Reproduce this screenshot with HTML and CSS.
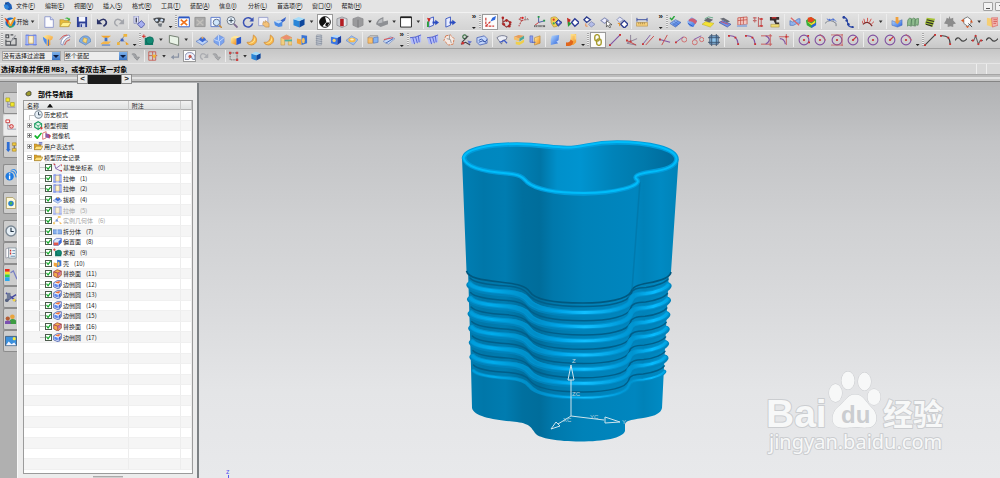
FILE: index.html
```html
<!DOCTYPE html>
<html lang="zh-CN">
  <head>
    <meta charset="UTF-8" />
    <meta name="viewport" content="width=device-width, initial-scale=1.0" />
    <title>部件导航器</title>
    <link rel="stylesheet" href="styles.css">
  </head>
  <body>
    <!-- icon set -->
    <svg class="defs" aria-hidden="true">
      <defs>
        <linearGradient id="gb" x2="1" y2="1"><stop stop-color="#b9dcff" /><stop offset="1" stop-color="#2a62dc" /></linearGradient>
        <linearGradient id="go" x2="1" y2="1"><stop stop-color="#fff0a0" /><stop offset="1" stop-color="#f08a1c" /></linearGradient>
      </defs>
      <symbol id="app" viewBox="0 0 13 13"><path d="M3 2l4-1 4 4 1 5-4 2-5-2z" fill="#1d5fb8" /><path d="M1 5l4-1 3 4-3 3-3-2z" fill="#2f86dc" /><path d="M3 2l3 2-3 1z" fill="#153a78" /></symbol>
      <symbol id="start" viewBox="0 0 13 13"><circle cx="7" cy="7" r="5.5" fill="#1c6fc4" /><path d="M0 2l5 3 2 3L11 1l2 1-5 9H6z" fill="#f39a1e" /><path d="M1 2l4 3-1 4z" fill="#d8301e" /><path d="M5 5l2 4 3-6z" fill="#ffe9b0" /><path d="M3 9l4 3 4-3-1 3-4 1z" fill="#3cb45c" /></symbol>
      <symbol id="new" viewBox="0 0 13 13"><path d="M2 .8h6L11.200 4v8.300H2z" fill="#fdfdff" stroke="#8d98cc" /><path d="M8 .8V4h3.200" fill="#d4daf6" stroke="#8d98cc" /></symbol>
      <symbol id="open" viewBox="0 0 13 13"><path d="M1 11.500V4h4l1 1h5v6.500z" fill="#e9bc3a" stroke="#a8862a" stroke-width=".6" /><path d="M1 11.500L4 7h9l-3 4.500z" fill="#fff08c" stroke="#b49430" stroke-width=".6" /><path d="M6 3q3-3 5 0l1-1v3H9l1-1Q8 2 6 3z" fill="#3fb23f" /></symbol>
      <symbol id="save" viewBox="0 0 13 13"><path d="M1 1h11v11H1z" fill="#2c3f96" /><path d="M3 1h7v5H3z" fill="#f4f6ff" /><path d="M4 8h6v4H4z" fill="#cdd4ea" /><path d="M5 9h1.500v3H5z" fill="#2c3f96" /></symbol>
      <symbol id="undo" viewBox="0 0 13 13"><path d="M3 6q6-5 8 0 1 3-3 5" fill="none" stroke="#2c3468" stroke-width="1.800" /><path d="M1 3v6h6z" fill="#2c3468" /></symbol>
      <symbol id="redo" viewBox="0 0 13 13"><path d="M10 6q-6-5-8 0-1 3 3 5" fill="none" stroke="#a3a5ab" stroke-width="1.600" /><path d="M12 3v6H6z" fill="#a3a5ab" /></symbol>
      <symbol id="copy" viewBox="0 0 13 13"><path d="M1 0h5v8H1z" fill="#dfe3fa" stroke="#7a7cb4" stroke-width=".7" /><path d="M3.500 2v5" stroke="#223" stroke-width="1.200" /><path d="M5 9l4-4 4 4-4 4z" fill="#a6aff0" stroke="#5058a8" /></symbol>
      <symbol id="binoc" viewBox="0 0 13 13"><path d="M0 3q6-3 13 0l-1 4q-2 1-3-1l-2 0q-1 3-4 1z" fill="#45484c" /><circle cx="4" cy="4.500" r="1.500" fill="#cfe0f4" /><circle cx="9.500" cy="4.500" r="1.500" fill="#cfe0f4" /><path d="M5 8l5 0-1 4-3-1z" fill="#72787e" /></symbol>
      <symbol id="fit" viewBox="0 0 13 13"><path d="M.7 1.700h11.600v10H.7z" fill="#fff" stroke="#2c58c4" /><path d="M.7 1.500h11.600" stroke="#2c58c4" stroke-width="2" /><path d="M3 4l7 6M10 4l-7 6" stroke="#f0721c" stroke-width="1.800" /></symbol>
      <symbol id="fitg" viewBox="0 0 13 13"><path d="M1 1.500h11v10H1z" fill="#a9a9a9" stroke="#949494" /><path d="M3 4l7 6M10 4l-7 6" stroke="#c2c0bc" stroke-width="1.500" /></symbol>
      <symbol id="zrect" viewBox="0 0 13 13"><path d="M1 1.500h10v10H1z" fill="#f4f8ff" stroke="#5a78cc" /><circle cx="7" cy="7" r="3.500" fill="#cfe6fb" stroke="#5a6a88" /><path d="M10 10l3 3" stroke="#c48a3c" stroke-width="1.600" /></symbol>
      <symbol id="zoom" viewBox="0 0 13 13"><circle cx="5.500" cy="5" r="4.300" fill="#eaf4fd" stroke="#66707e" /><path d="M3 5h5M5.500 2.500v5" stroke="#345" /><path d="M8.500 8.500l4 4" stroke="#7c6a90" stroke-width="2" /></symbol>
      <symbol id="rot" viewBox="0 0 13 13"><path d="M11 4.500A5 5 0 1 0 11.500 8" fill="none" stroke="#3a52b4" stroke-width="1.600" /><path d="M12.500 1v5H8z" fill="#3a52b4" /></symbol>
      <symbol id="pan" viewBox="0 0 13 13"><path d="M.7 1.500h10v9H.7z" fill="#f2f2fb" stroke="#98a0cc" /><path d="M6 6l2 1V5l4 3v4H8L5 9z" fill="#f4c27a" stroke="#b88440" stroke-width=".6" /></symbol>
      <symbol id="persp" viewBox="0 0 13 13"><path d="M0 6l5-1 4 1v5l-4 1-4-2z" fill="#4a8ae4" /><path d="M7 5l6-4-1 4-3 2z" fill="#3a64c8" /><path d="M0 6l5-1 4 1-4 2z" fill="#c4dcf8" /></symbol>
      <symbol id="cube" viewBox="0 0 13 13"><path d="M.5 3.500L7 5.500v7L.5 10z" fill="#2a86d8" /><path d="M7 5.500l5.500-2.500v6.500L7 12.500z" fill="#0d469c" /><path d="M.5 3.500L6 1l6.500 2L7 5.500z" fill="#a4dcfa" /></symbol>
      <symbol id="shade" viewBox="0 0 13 13"><circle cx="6.500" cy="6.500" r="5.800" fill="#fff" stroke="#111" /><path d="M6.500.700a5.800 5.800 0 0 0-3 10.800L8 6.500z" fill="#111" /><path d="M8 7h3.500L9 11.500 6.500 10z" fill="#111" /></symbol>
      <symbol id="sect" viewBox="0 0 13 13"><path d="M1 3l5.500-2L12 3v7l-5.500 2.500L1 10z" fill="#c9cbd0" stroke="#7f8288" stroke-width=".7" /><path d="M4.500 3h4v8h-4z" fill="#b31c22" /><path d="M8.500 3l2 .7v6.600l-2 .7z" fill="#e8e8ec" /></symbol>
      <symbol id="sectg" viewBox="0 0 13 13"><path d="M1 3l5.500-2L12 3v7l-5.500 2.500L1 10z" fill="#9a9a9c" stroke="#88888a" stroke-width=".7" /><path d="M6.500 4v8" stroke="#77777a" /></symbol>
      <symbol id="wedge" viewBox="0 0 13 13"><path d="M0 9Q1 3 8 1v5l5-1v4l-8 3z" fill="#8e9094" /><path d="M2 8q1-4 5-5v4z" fill="#bcbec2" /></symbol>
      <symbol id="wbox" viewBox="0 0 13 13"><path d="M.6 1h11.800v11H.6z" fill="#fff" stroke="#222" /><path d="M.6 1.500h11.800" stroke="#222" stroke-width="1.600" /></symbol>
      <symbol id="clip" viewBox="0 0 13 13"><path d="M2 3l5-2v9l-5 2z" fill="#e8edff" stroke="#3c58c0" /><path d="M6 6h3V4l4 3-4 3V8H6z" fill="#2a4cc0" /></symbol>
      <symbol id="clipg" viewBox="0 0 13 13"><use href="#clip" /><path d="M0 2l4 1-2 4z" fill="#d8281c" /><path d="M0 6h2v6H0z" fill="#2ca03c" /></symbol>
      <symbol id="csys" viewBox="0 0 13 13"><path d="M2 2v9h9M2 11l5-5" fill="none" stroke="#d03a34" stroke-dasharray="3 1" stroke-width="1.300" /><path d="M7 6l2-4 4-2-1 4z" fill="#2c66dc" /></symbol>
      <symbol id="pts" viewBox="0 0 13 13"><path d="M2 1v6l4-3 4 3-2 5M1 8l5 4 5-3" fill="none" stroke="#8e3a3a" stroke-width="1.200" /><g fill="#b02424"><circle cx="2" cy="2" r="1.400" /><circle cx="6" cy="5" r="1.400" /><circle cx="10" cy="7" r="1.400" /><circle cx="3" cy="9" r="1.400" /><circle cx="9" cy="11" r="1.400" /></g></symbol>
      <symbol id="csysr" viewBox="0 0 13 13"><path d="M2 3l3 2-3 6M5 5l7-2M4 1v4" fill="none" stroke="#b65252" stroke-dasharray="2 1" stroke-width="1.200" /><circle cx="6" cy="2" r="1.300" fill="#d22" /><path d="M9 0v4h4" stroke="#999" fill="none" /></symbol>
      <symbol id="wcs" viewBox="0 0 13 13"><path d="M5 0v7l7-2" fill="none" stroke="#4158a4" /><path d="M5 7l-4 3" stroke="#c33" /><path d="M4 0h2v2H4zM10 4h2v2h-2z" fill="#2b9a4a" /><path d="M0 10h12v2H0z" fill="#666" /><path d="M1 11h1m1 0h2m1 0h1m1 0h2" stroke="#ddd" /></symbol>
      <symbol id="pal" viewBox="0 0 13 13"><path d="M1 2q6-3 8 2l-2 3 1 4-4 1q-4-4-3-10z" fill="#f2cf56" stroke="#a9882c" stroke-width=".6" /><circle cx="4" cy="4" r="1.200" fill="#d32" /><circle cx="4" cy="8" r="1.200" fill="#3a5" /><path d="M6 7l3-3 4 3-4 4z" fill="#5567c8" stroke="#26347c" /><path d="M9 5.500L10.500 7 9 8.500 8 7z" fill="#fff" /></symbol>
      <symbol id="show" viewBox="0 0 13 13"><path d="M0 2l4 2-3 6z" fill="#c22a22" /><path d="M1 6l4 2-4 4z" fill="#2a9a38" /><path d="M5 7l3.500-4L13 7l-4.500 4z" fill="#fff" stroke="#2c3c96" stroke-width="1.500" /></symbol>
      <symbol id="dia" viewBox="0 0 13 13"><path d="M1 4l3-3 4 3-4 3z" fill="#fff" stroke="#2c3c8e" stroke-width="1.400" /><path d="M6 9l3-3 4 3-4 3z" fill="#b4bce8" stroke="#8890b8" /><path d="M3 8v3h2" fill="none" stroke="#e84" /></symbol>
      <symbol id="diac" viewBox="0 0 13 13"><path d="M1 5l4-3 4 3-4 3z" fill="#eef" stroke="#8890b8" stroke-width="1.200" /><path d="M7 5v7l1.500-2 2 3 1-1-1.500-2.500H13z" fill="#fff" stroke="#333" stroke-width=".7" /></symbol>
      <symbol id="diab" viewBox="0 0 13 13"><path d="M1 4l3-3 4 3-4 3z" fill="#e4e6f8" stroke="#8890b8" /><path d="M5 9l4-4 4 4-4 4z" fill="#fff" stroke="#2c3c8e" stroke-width="1.500" /><path d="M2 8h2v3" fill="none" stroke="#e80" /></symbol>
      <symbol id="ruler" viewBox="0 0 13 13"><path d="M.5 7h12v4H.5z" fill="#f5cf7a" stroke="#ad8944" stroke-width=".6" /><path d="M1 4h11M1 2v4M12 2v4" stroke="#33489c" /><path d="M3 7v2m2-2v2m2-2v2m2-2v2" stroke="#84642c" stroke-width=".6" /></symbol>
      <symbol id="surf" viewBox="0 0 13 13"><path d="M1 8l6-4 6 3-6 5z" fill="url(#gb)" stroke="#3a5aa8" stroke-width=".6" /><path d="M3 7l6 4M5 5.500l6 4M4 10l6-4.500" stroke="#4668bc" stroke-width=".6" /><path d="M1 2l2 2 3-4" fill="none" stroke="#27a53a" stroke-width="1.500" /></symbol>
      <symbol id="surf2" viewBox="0 0 13 13"><path d="M1 6l5-5 6 4-4 7-4-1z" fill="url(#gb)" /><path d="M3 4q5-4 9 2l-2 3Q7 5 3 6z" fill="#ce5f74" /><path d="M2 8l5 3" stroke="#2a56c0" /></symbol>
      <symbol id="slab" viewBox="0 0 13 13"><path d="M0 9l4-3 9 2-4 4z" fill="#f4e234" stroke="#b3a416" stroke-width=".5" /><path d="M2 5l4-3 6 2-4 3z" fill="#666a72" /><path d="M3 3l4-2 5 1" stroke="#6a8" fill="none" /></symbol>
      <symbol id="slabb" viewBox="0 0 13 13"><path d="M0 7l4-2 9 4-4 3z" fill="#6f8fe8" stroke="#2d3f96" stroke-width=".6" /><path d="M1 3l4-1 7 4-3 1z" fill="#696c76" /><path d="M2 6l8 3" stroke="#d44" stroke-width=".8" /></symbol>
      <symbol id="grid" viewBox="0 0 13 13"><path d="M2 2l10-1v8L2 10z" fill="#f3c9c4" stroke="#c04a40" stroke-width=".8" /><path d="M2 5l10-1M5 2v8M8 1v8" stroke="#c04a40" stroke-width=".8" /><path d="M1 10l11-1v3H1z" fill="#9ab0d8" /></symbol>
      <symbol id="dim" viewBox="0 0 13 13"><path d="M1 2h4M1 5h4M3 1v6M7 1v11M7 3h5M7 11h5M10 3v8" fill="none" stroke="#c26a6a" stroke-width="1.200" /><path d="M8 4l2-2 2 2zM8 10l2 2 2-2z" fill="#c33" /></symbol>
      <symbol id="drill" viewBox="0 0 13 13"><path d="M1 1h10v3H8v3h3v2H7L5 5H1z" fill="#342c2c" /><path d="M3 2h5" stroke="#e33" stroke-width="1.200" /><path d="M2 9h9v3H2z" fill="#f0dc74" stroke="#9a8434" stroke-width=".5" /></symbol>
      <symbol id="flag" viewBox="0 0 13 13"><path d="M1 5q3 3 6 0t5-2v5q-3-1-5 1t-6 1z" fill="#90b4ec" stroke="#3e63b4" stroke-width=".6" /><path d="M2 2l9 8" stroke="#d66" stroke-width="1.400" /></symbol>
      <symbol id="heat" viewBox="0 0 13 13"><path d="M1 5l5-4 6 3v5l-5 4-5-3z" fill="#36ad3c" /><path d="M3 2l4-1 4 3-4 3-4-1z" fill="#e8451c" /><path d="M2 6l5 2 4-3v3l-4 2z" fill="#f6dc2a" /><path d="M7 10l5-3v3l-5 3z" fill="#2d62d4" /></symbol>
      <symbol id="curvep" viewBox="0 0 13 13"><path d="M0 8q5-6 12 0v3" fill="none" stroke="#767c88" /><path d="M2 3l3 2 4-2 3 3" fill="none" stroke="#4c70d0" /><g fill="#4c70d0"><circle cx="5" cy="4" r="1" /><circle cx="9" cy="4" r="1" /></g></symbol>
      <symbol id="spl" viewBox="0 0 13 13"><path d="M1 1q5 1 5 6t6 5" fill="none" stroke="#324fae" stroke-width="1.300" /><g fill="#26409c"><circle cx="2" cy="1.500" r="1.500" /><circle cx="5" cy="5" r="1.300" /><circle cx="7" cy="9" r="1.300" /><circle cx="11.500" cy="12" r="1.300" /></g></symbol>
      <symbol id="comb" viewBox="0 0 13 13"><path d="M1 9q5-5 10 2" fill="none" stroke="#7d2727" stroke-width="1.300" /><path d="M1 8L0 5m3 2L2 3m4 3V2m2 5l2-4m0 6l3-3" stroke="#d24e46" /></symbol>
      <symbol id="cup" viewBox="0 0 13 13"><path d="M1 5l5 2 6-3v6l-5 2-6-2z" fill="url(#gb)" stroke="#3a62b4" stroke-width=".5" /><path d="M5 1h3v4h2L7 9 4 6h1z" fill="#f0a03c" /></symbol>
      <symbol id="ribb" viewBox="0 0 13 13"><path d="M1 4q2-3 4-1l-1 8q-2-2-4 0zM5 4q2-3 4-1l-1 8q-2-2-3 0zM9 4q2-2 4-1l-1 7q-2-1-3 1z" fill="#8fbc8e" stroke="#4d7c54" stroke-width=".7" /></symbol>
      <symbol id="zeb" viewBox="0 0 13 13"><path d="M3 2l9 1-3 9-8-3z" fill="#a5c234" /><path d="M3 4l8 2M2 6.500l8 2M2 9l7 2" stroke="#2c2c2c" stroke-width="1.200" /></symbol>
      <symbol id="tree" viewBox="0 0 13 13"><path d="M6 0l1 3 3-1 0 3 3 3-3 1v3l-3-1-3 1V9L0 8l2-3 1-3 2 1z" fill="#8c8c8c" /></symbol>
      <symbol id="mov" viewBox="0 0 13 13"><path d="M3 3l4-2 4 3v4l-4 3-4-3z" fill="#fafafa" stroke="#777" /><g fill="#d9531e"><path d="M0 5l3-2v4zM11 4l2 3h-3zM5 11h4l-2 2z" /></g><path d="M8 8l4 4" stroke="#444" /></symbol>
      <symbol id="book" viewBox="0 0 13 13"><path d="M1 2l6 1v9l-6-2z" fill="#f6cf74" /><path d="M6 2h7v8l-6 2z" fill="#f2b4b0" stroke="#d6625c" stroke-width=".7" /><path d="M8 4h4M8 6h4M8 8h3" stroke="#d6625c" /></symbol>
      <symbol id="sk" viewBox="0 0 13 13"><path d="M1 1h3v3H1zM6 1h3M1 6v6h11V5H8" fill="none" stroke="#4c4f54" stroke-width="1.200" /><path d="M5 9l6-8 1 1-6 8z" fill="#9a9ca2" /><path d="M1 8h5v4" fill="none" stroke="#4c4f54" /></symbol>
      <symbol id="ext" viewBox="0 0 13 13"><path d="M1 1h3v11H1zM9 1h3v11H9z" fill="#a9bcfa" stroke="#5a70dc" stroke-width=".6" /><path d="M4 2h5v8H4z" fill="#fff6d0" stroke="#d9a13c" stroke-width=".6" /><path d="M0 11.500h13M1 1.500h11" stroke="#6b84e4" /></symbol>
      <symbol id="rev" viewBox="0 0 13 13"><path d="M1 3q5-4 11 0l-1 3-2 1v5l-4 1V6z" fill="url(#go)" /><path d="M1 3l4 3v6Q1 8 1 3z" fill="#4d8cec" /><path d="M7 6v7" stroke="#3c70d4" /></symbol>
      <symbol id="swp" viewBox="0 0 13 13"><path d="M2 11Q2 3 11 1l1 2Q5 5 4 12z" fill="#fff" stroke="#7484b8" stroke-width=".8" /><path d="M1 6Q4 1 9 1M6 12q1-5 6-6" fill="none" stroke="#d24848" /></symbol>
      <symbol id="dome" viewBox="0 0 13 13"><path d="M0 8q2-6 7-6t6 6l-6 4z" fill="#80aee4" stroke="#4f77b0" stroke-width=".6" /><path d="M5 4l4 1-1 5-4-2z" fill="#f7d97c" stroke="#b7862c" stroke-width=".5" /></symbol>
      <symbol id="pad" viewBox="0 0 13 13"><path d="M1 2h11l-3 2H4z" fill="#f2a52c" /><path d="M5 4h3v4H5z" fill="#3c70cc" /><path d="M1 10l3-2h8l-3 3H1z" fill="#f4b64c" /><path d="M2 12h9" stroke="#3c70cc" /></symbol>
      <symbol id="link" viewBox="0 0 13 13"><path d="M1 10l4-4 3 2M5 6l3-4" fill="none" stroke="#858585" /><path d="M0 9h3v3H0zM7 0h4v3H7z" fill="#efb43a" /><path d="M4 5h3v3H4z" fill="#3b62c8" /><path d="M9 8l4 3-3 1z" fill="#f0a020" /></symbol>
      <symbol id="unite" viewBox="0 0 13 13"><path d="M3 4h6v3h3v5H3z" fill="#0f7c68" /><circle cx="8.500" cy="7" r="4" fill="#128a74" stroke="#0b5a4b" stroke-width=".6" /><path d="M0 2.500h4M2 .500v4" stroke="#d32822" /></symbol>
      <symbol id="plane" viewBox="0 0 13 13"><path d="M1.500 1.500l10 2v9l-10-3z" fill="#e8f2e6" stroke="#6c7a6a" /></symbol>
      <symbol id="off" viewBox="0 0 13 13"><path d="M0 8l6-3 7 3-6 4z" fill="#bcd3f8" stroke="#5878c0" stroke-width=".7" /><path d="M3 6q4-6 8 0L7 9z" fill="#3c6ad4" /><path d="M6 3h2v2H6z" fill="#f8b054" /></symbol>
      <symbol id="sph" viewBox="0 0 13 13"><path d="M1 6l5-5 6 3v5l-5 4-6-4z" fill="#7ba4ee" stroke="#5a78cc" stroke-width=".5" /><path d="M1 6l6 2 5-4M7 8v5M6 1v6" stroke="#dce8ff" fill="none" stroke-width=".8" /></symbol>
      <symbol id="blk" viewBox="0 0 13 13"><path d="M1 4l6 1v7l-6-2z" fill="url(#go)" /><path d="M1 4l4-2 7 1-5 2z" fill="#ffe79c" /><path d="M7 5l5-2v7l-5 2z" fill="#2a58cc" /></symbol>
      <symbol id="blend" viewBox="0 0 13 13"><path d="M8 1q5 3 3 8-2 3-5 3-4 0-5-3 7 1 7-8z" fill="#f8b84a" stroke="#c67c28" stroke-width=".6" /><path d="M9 3q2 4-1 6-3 2-5 1 7-1 6-7z" fill="#ffe79a" /></symbol>
      <symbol id="shell" viewBox="0 0 13 13"><path d="M1 4l6-3 6 3v8H9V6H5v6H1z" fill="#f1ce80" stroke="#c79547" stroke-width=".6" /><path d="M5 6h8v2H5z" fill="#54b0a0" /><path d="M1 4l6-3 6 3-4 2H5z" fill="#ec8f70" /></symbol>
      <symbol id="hole" viewBox="0 0 13 13"><path d="M1 5l5 1v6l-5-2z" fill="#f2a43c" /><path d="M6 1l6 1v8l-6 2z" fill="#3a74d4" /><ellipse cx="8" cy="7" rx="1.600" ry="3" fill="#f7c25c" /></symbol>
      <symbol id="thr" viewBox="0 0 13 13"><path d="M4 1h5v11H4z" fill="#cdd2da" stroke="#8c94a0" stroke-width=".7" /><path d="M3 3l7-1M3 5l7-1M3 7l7-1M3 9l7-1M3 11l7-1" stroke="#8a92a2" /></symbol>
      <symbol id="cubeh" viewBox="0 0 13 13"><path d="M1 3l7 1v8l-7-2z" fill="#3b76e4" /><path d="M8 4l4-2v7l-4 3z" fill="#1c3fa4" /><path d="M1 3l4-2 7 1-4 2z" fill="#b9dcfc" /><circle cx="4.500" cy="7" r="1.800" fill="#f6d470" /></symbol>
      <symbol id="boss" viewBox="0 0 13 13"><path d="M0 7l6-5 7 4-5 6z" fill="#9bc0f2" stroke="#5f82c4" stroke-width=".6" /><ellipse cx="6.500" cy="6.500" rx="4" ry="2.500" fill="#f6b84a" /><ellipse cx="6.500" cy="6" rx="2" ry="1" fill="#fff0c0" /></symbol>
      <symbol id="split" viewBox="0 0 13 13"><path d="M1 4h5v6H1z" fill="#f7c070" stroke="#b97f38" stroke-width=".6" /><path d="M7 4l5-1v6l-5 1z" fill="#88b4ee" stroke="#4668b4" stroke-width=".6" /><path d="M1 4l2-2h9" fill="none" stroke="#8d8d8d" /></symbol>
      <symbol id="trim" viewBox="0 0 13 13"><path d="M0 8l8-5 5 2-7 6z" fill="#c6d8f6" stroke="#6d84b8" stroke-width=".6" /><path d="M1 6l10-2" stroke="#d44" /><path d="M3 10l8-5" stroke="#3c62b4" /></symbol>
      <symbol id="mesh" viewBox="0 0 13 13"><path d="M0 4q6 0 12-3v8q-5 0-10 2z" fill="#b3bdf8" /><path d="M0 4q6 0 12-3M3 4l2 7M6 3l2 7M9 2l1 7" fill="none" stroke="#4654cc" stroke-width=".9" /></symbol>
      <symbol id="ring" viewBox="0 0 13 13"><path d="M3 2l5-1 4 4-1 6-5 1-5-5z" fill="#f6e9e2" stroke="#d2764c" stroke-dasharray="3 1" /><path d="M4 5l4 1 1 4M7 1v5" fill="none" stroke="#999" /></symbol>
      <symbol id="nurb" viewBox="0 0 13 13"><circle cx="5" cy="3" r="2" fill="none" stroke="#3b6f44" stroke-width="1.200" /><path d="M2 9l7-7M1 11l5-2 5 3" fill="none" stroke="#433f46" stroke-width="1.200" /><circle cx="3" cy="10" r="1.500" fill="#c33" /><path d="M8 7l5 1-3 3z" fill="#6a78cc" /></symbol>
      <symbol id="wave" viewBox="0 0 13 13"><path d="M1 4l8-2 3 3v5l-8 2-3-3z" fill="#c4d6fa" stroke="#5a72bc" /><path d="M3 7q3-3 5 0t4-1M3 9q4-3 8 0" fill="none" stroke="#3150a4" /></symbol>
      <symbol id="cone" viewBox="0 0 13 13"><path d="M1 4q5-4 11-1l-1 3-4 1-1 4-3-4z" fill="#eceef6" stroke="#5a607c" stroke-width=".8" /><path d="M4 9l5-2 3 3" fill="none" stroke="#3c58c8" stroke-width="1.300" /></symbol>
      <symbol id="stack" viewBox="0 0 13 13"><path d="M1 3l5-2 6 1-5 3z" fill="#e79c58" /><path d="M1 3l6 2v3L1 6z" fill="#f6be66" /><path d="M7 5l5-3v3L7 8z" fill="#4aa89a" /><path d="M3 8l4 1 5-3v3l-5 3-4-1z" fill="#f0cf4a" /></symbol>
      <symbol id="join" viewBox="0 0 13 13"><path d="M1 2h3v7H1z" fill="#8ca0f0" stroke="#4c60c0" stroke-width=".6" /><path d="M6 4l6-2v8l-6 2z" fill="url(#go)" stroke="#b77f2b" stroke-width=".6" /><path d="M3 9h4" stroke="#4c60c0" /></symbol>
      <symbol id="sheet" viewBox="0 0 13 13"><path d="M3 2l8-1-1 9-8 2q-1-5 1-10z" fill="url(#gb)" /><path d="M8 8l4-2-1 5z" fill="#c8d8f4" /></symbol>
      <symbol id="flan" viewBox="0 0 13 13"><path d="M5 0h6v9l-3 3H3l2-5z" fill="url(#go)" /><path d="M0 9q4 1 5-3l3 2q-1 5-5 5H0z" fill="#e0661c" /><path d="M6 1h4v5" fill="none" stroke="#ffe48a" /></symbol>
      <symbol id="chain" viewBox="0 0 13 13"><rect x="3" y="0.700" width="5" height="7" rx="2.500" fill="none" stroke="#a69a2a" stroke-width="1.500" /><rect x="5" y="5.300" width="5" height="7" rx="2.500" fill="none" stroke="#a69a2a" stroke-width="1.500" /></symbol>
      <symbol id="line" viewBox="0 0 13 13"><path d="M1 12L12 1" stroke="#8155a4" stroke-width="1.200" /><path d="M0 11h2v2H0zM11 0h2v2h-2z" fill="#cc2f2f" /></symbol>
      <symbol id="ax" viewBox="0 0 13 13"><path d="M5 1v7l7-3M5 8l-4 2 10 2" fill="none" stroke="#8a7f96" /><path d="M1 7l10 5" stroke="#c43a3a" /><path d="M4 7h2v2H4zM0 6h2v2H0z" fill="#c43a3a" /></symbol>
      <symbol id="par" viewBox="0 0 13 13"><path d="M1 11L9 1" stroke="#7a5aa4" /><path d="M4 12l9-10" stroke="#c94848" /><path d="M0 10h2v2H0z" fill="#c33" /></symbol>
      <symbol id="crs" viewBox="0 0 13 13"><path d="M1 6l11 3" stroke="#8155a4" stroke-width="1.200" /><path d="M3 12l6-11" stroke="#c94848" /><path d="M0 5h2v2H0z" fill="#c33" /></symbol>
      <symbol id="tan" viewBox="0 0 13 13"><circle cx="10" cy="6" r="2.700" fill="none" stroke="#d06a6a" /><path d="M1 9l8-6" stroke="#8155a4" /><path d="M0 8h2v2H0z" fill="#c33" /></symbol>
      <symbol id="tan2" viewBox="0 0 13 13"><circle cx="3" cy="9" r="2.700" fill="none" stroke="#d06a6a" /><circle cx="10.500" cy="6" r="2.300" fill="none" stroke="#d06a6a" /><path d="M2 6l8-4" stroke="#8155a4" /></symbol>
      <symbol id="quad" viewBox="0 0 13 13"><path d="M2 2h9v9H2z" fill="#8fc4ec" stroke="#39506e" /><path d="M0 4h13M0 9h13M4 0v13M9 0v13" stroke="#39506e" /></symbol>
      <symbol id="arc" viewBox="0 0 13 13"><path d="M1 2q9-1 10 9" fill="none" stroke="#8155a4" stroke-width="1.200" /><path d="M0 1h2v2H0zM10 10h2v2h-2zM7 3h2v2H7z" fill="#cc2f2f" /></symbol>
      <symbol id="arc2" viewBox="0 0 13 13"><path d="M0 2h12M0 11h12M10 0v13" fill="none" stroke="#c85656" /><path d="M5 2q8 4 0 9" fill="none" stroke="#8155a4" stroke-width="1.200" /></symbol>
      <symbol id="arc3" viewBox="0 0 13 13"><path d="M1 3h11M9 0v12" fill="none" stroke="#c85656" /><path d="M2 5q5 0 6 6" fill="none" stroke="#8155a4" stroke-width="1.200" /><path d="M8 2h2v2H8z" fill="#c33" /></symbol>
      <symbol id="cir" viewBox="0 0 13 13"><circle cx="6.500" cy="6.500" r="5.300" fill="none" stroke="#8050a0" stroke-width="1.200" /><circle cx="6.500" cy="6.500" r="1.200" fill="#cc2f2f" /></symbol>
      <symbol id="cir3" viewBox="0 0 13 13"><use href="#cir" /><path d="M10 1h2v2h-2zM11 8h2v2h-2z" fill="#cc2f2f" /></symbol>
      <symbol id="cirt" viewBox="0 0 13 13"><use href="#cir" /><path d="M6 0l7 7" stroke="#c85656" /></symbol>
      <symbol id="cirq" viewBox="0 0 13 13"><use href="#cir" /><path d="M0 1h13M12 0v13M0 12h13" stroke="#c85656" stroke-width=".8" /></symbol>
      <symbol id="cirr" viewBox="0 0 13 13"><use href="#cir" /><path d="M6.500 6.500L10 3" stroke="#c33" stroke-width="1.200" /></symbol>
      <symbol id="kline" viewBox="0 0 13 13"><path d="M1 12L12 1" stroke="#444" stroke-width="1.200" /><path d="M0 11h2v2H0zM11 0h2v2h-2z" fill="#cc2f2f" /></symbol>
      <symbol id="karc" viewBox="0 0 13 13"><path d="M1 2q10-1 10 9" fill="none" stroke="#444" stroke-width="1.200" /><path d="M0 1h2v2H0zM10 10h2v2h-2zM8 3h2v2H8z" fill="#cc2f2f" /></symbol>
      <symbol id="kspl" viewBox="0 0 13 13"><path d="M0 7q3-5 6-1t7-1" fill="none" stroke="#444" stroke-width="1.300" /></symbol>
      <symbol id="kz" viewBox="0 0 13 13"><path d="M0 7h3l2-5 3 9 2-4h3" fill="none" stroke="#666" stroke-width="1.200" /><g fill="#cc2f2f"><path d="M4 1h2v2H4zM7 10h2v2H7zM1 6h2v2H1zM10 6h2v2h-2z" /></g></symbol>
      <symbol id="snap" viewBox="0 0 13 13"><path d="M1 1h9v11H1zM1 6h11M6 1v11" fill="none" stroke="#c44a40" /><path d="M5 5h6l-3 5z" fill="#f0b634" /></symbol>
      <symbol id="gh" viewBox="0 0 13 13"><path d="M1 4q6-2 6 4h4l-3 4-4-4" fill="#a2a4a8" stroke="#88898c" /></symbol>
      <symbol id="enter" viewBox="0 0 13 13"><path d="M11 3v5H4" fill="none" stroke="#8a93a4" stroke-width="1.600" /><path d="M1 8l4-3v6z" fill="#8a93a4" /></symbol>
      <symbol id="mag" viewBox="0 0 13 13"><path d="M0 9q0-7 6-7t7 6v3h-3l-2-4-3 4H0z" fill="#eff1fb" stroke="#69719a" /><circle cx="6.500" cy="7" r="2" fill="#c6564a" /></symbol>
      <symbol id="marq" viewBox="0 0 13 13"><path d="M1.500 2.500h9v9h-9z" fill="none" stroke="#555" stroke-dasharray="2 1" /><path d="M0 1h3v3H0zM9 1h3v3H9zM9 10h3v3H9z" fill="#c44" /></symbol>
      <symbol id="clock" viewBox="0 0 13 13"><circle cx="6.500" cy="6.500" r="5.400" fill="#e6eff6" stroke="#7b8894" stroke-width="1.500" /><path d="M6.500 3v4h3" fill="none" stroke="#234" stroke-width="1.200" /></symbol>
      <symbol id="views" viewBox="0 0 13 13"><path d="M1 4l5-3 5 3v5l-5 3-5-3z" fill="#e4f5ea" stroke="#149a5c" stroke-width="1.500" /><path d="M1 4l5 3 5-3M6 7v5" stroke="#149a5c" fill="none" /><path d="M9 8l4 2-3 3z" fill="#d33" /></symbol>
      <symbol id="cam" viewBox="0 0 13 13"><path d="M1 3l5-2v9l-5 2z" fill="#fff" stroke="#d04848" /><path d="M5 3l6 2v6l-6-2z" fill="#8b5aa8" /><path d="M9 4l4 3-2 4z" fill="#c63a52" /></symbol>
      <symbol id="fold" viewBox="0 0 13 13"><path d="M0 11V3h4l1 1h5v7z" fill="#e0a62c" stroke="#9a7420" stroke-width=".8" /><path d="M0 11l3-5h10l-3 5z" fill="#ffe27c" stroke="#9a7420" stroke-width=".8" /></symbol>
      <symbol id="folde" viewBox="0 0 13 13"><use href="#fold" /><path d="M7 1h5M7 3h5" stroke="#3848b4" stroke-width="1.200" /></symbol>
      <symbol id="datum" viewBox="0 0 13 13"><path d="M2 1l2 7 8 4M4 8l7-5" fill="none" stroke="#8664b0" stroke-width="1.300" /><path d="M1 0l3 3H1zM11 2h2v3zM10 10h3v3z" fill="#cc3f3f" /></symbol>
      <symbol id="tsplit" viewBox="0 0 13 13"><path d="M0 4h12l1 1v5H0z" fill="#86b0ec" stroke="#4a72bc" stroke-width=".8" /><path d="M6 3v8" stroke="#fff" /></symbol>
      <symbol id="toff" viewBox="0 0 13 13"><path d="M1 5l4-3h7v6l-4 4H1z" fill="#dbe6fa" stroke="#3b58b8" /><path d="M1 8h7v4H1z" fill="#e2574a" /><path d="M8 6l4-3v5l-4 4z" fill="#3b6ae0" /></symbol>
      <symbol id="rep" viewBox="0 0 13 13"><path d="M1 4l5-3 6 2v6l-5 4-6-3z" fill="#f5b04c" stroke="#8d3434" /><path d="M1 4l6 2 5-3M7 6v6" fill="none" stroke="#a63a64" stroke-width="1.300" /><path d="M8 6l3-2v4l-3 2z" fill="#be6bc8" /></symbol>
      <symbol id="eb" viewBox="0 0 13 13"><path d="M1 4l5-3h6v7l-4 5-7-3z" fill="#f4f6ff" stroke="#29429c" /><path d="M2 5l5 2v4l-5-2z" fill="#5c88f0" /><path d="M3 4q3-3 8-2l-3 3z" fill="#f0713a" /><path d="M8 7l3-3v4l-3 4z" fill="#3b5cc8" /></symbol>
      <symbol id="ttree" viewBox="0 0 13 13"><path d="M3 4v7h8M3 8h3" fill="none" stroke="#8a8ab0" /><path d="M1 1h4v4H1zM6 6h4v4H6z" fill="#f4ea2c" stroke="#a39a20" stroke-width=".7" /></symbol>
      <symbol id="tnav" viewBox="0 0 13 13"><path d="M1 1h4v3H1z" fill="#fff" stroke="#c33" /><path d="M3 4v7h9M3 7h4" fill="none" stroke="#9a9aae" /><circle cx="7" cy="8" r="2" fill="#f4c4c4" stroke="#c33" /></symbol>
      <symbol id="tcon" viewBox="0 0 13 13"><path d="M2 1h3v8h1l-2.500 3L1 9h1z" fill="#2d6dd4" /><path d="M8 2h4v3H8zM8 8h4v3H8z" fill="#f2cc3c" stroke="#a8862c" stroke-width=".7" /><path d="M10 5v3" stroke="#555" /></symbol>
      <symbol id="tinfo" viewBox="0 0 13 13"><circle cx="5" cy="8" r="4.500" fill="#1f7be0" /><path d="M5 7v4M5 4.700v1.200" stroke="#fff" stroke-width="1.500" /><path d="M6 2q5 0 6 7M7 0q5 0 6 5" fill="none" stroke="#2f8ae8" stroke-width="1.200" /></symbol>
      <symbol id="thtml" viewBox="0 0 13 13"><path d="M1.500.500h7l3 3v9h-10z" fill="#fff9d8" stroke="#a09050" stroke-width=".8" /><circle cx="6.500" cy="7" r="3" fill="#2a80d0" /><path d="M5 6l2-1 1 2-2 2z" fill="#4cb848" /></symbol>
      <symbol id="tlist" viewBox="0 0 13 13"><path d="M1 2l3-1v10l-3 1z" fill="#fff" stroke="#889" stroke-width=".7" /><path d="M4 1h8v11H4z" fill="#f2f8fb" stroke="#7b8b94" stroke-width=".8" /><path d="M6 3v2M6 6v2" stroke="#c33" stroke-width="1.500" /><path d="M8 4h3M8 7h3M6 10h5" stroke="#5a86a8" /></symbol>
      <symbol id="tcol" viewBox="0 0 13 13"><path d="M0 0h5v3H0z" fill="#e82a1c" /><path d="M0 3h5v3H0z" fill="#f6e22a" /><path d="M0 6h5v3H0z" fill="#38d048" /><path d="M0 9h5v4H0z" fill="#2aa8ec" /><path d="M6 4l3-2 4 9" fill="none" stroke="#777ec4" stroke-width="1.400" /></symbol>
      <symbol id="tsci" viewBox="0 0 13 13"><path d="M1 2l11 9M1 11L12 4" stroke="#4448a0" stroke-width="1.500" /><circle cx="2" cy="10" r="2" fill="#55607c" /><path d="M2 2h4v7H2z" fill="#6f7a98" /><circle cx="10" cy="10" r="1.500" fill="#f0d23c" /></symbol>
      <symbol id="tppl" viewBox="0 0 13 13"><circle cx="8" cy="4" r="2.500" fill="#eaa43c" /><path d="M5 12V8q3-3 7 0v4z" fill="#3d9c42" /><circle cx="3" cy="6" r="2.300" fill="#b45c34" /><path d="M0 12V9q3-2 6 0v3z" fill="#7a50b0" /></symbol>
      <symbol id="tpic" viewBox="0 0 13 13"><path d="M.5 1.500h12v10H.5z" fill="#3c90dc" stroke="#34506c" stroke-width=".8" /><circle cx="10" cy="4" r="1.700" fill="#f8ea3a" /><path d="M1 11l3-4 3 3 3-2 2 3z" fill="#f2f4ff" /></symbol>
    </svg>

    <div class="app">
      <nav class="menubar">
        <svg class="ic"><use href="#app" /></svg>
        <button>文件(<u>F</u>)</button>
        <button>编辑(<u>E</u>)</button>
        <button>视图(<u>V</u>)</button>
        <button>插入(<u>S</u>)</button>
        <button>格式(<u>R</u>)</button>
        <button>工具(<u>T</u>)</button>
        <button>装配(<u>A</u>)</button>
        <button>信息(<u>I</u>)</button>
        <button>分析(<u>L</u>)</button>
        <button>首选项(<u>P</u>)</button>
        <button>窗口(<u>O</u>)</button>
        <button>帮助(<u>H</u>)</button>
        <div class="wincontrols">
          <button class="min" aria-label="最小化"></button>
          <button class="max" aria-label="还原"></button>
        </div>
      </nav>

      <div class="toolrow row1">
        <div class="tools t-std">
          <i class="grip"></i>
          <button class="start"><svg class="ic"><use href="#start" /></svg>开始<i class="arr"></i></button>
          <i class="sep"></i>
          <button><svg class="ic"><use href="#new" /></svg></button>
          <button><svg class="ic"><use href="#open" /></svg></button>
          <button><svg class="ic"><use href="#save" /></svg></button>
          <i class="sep"></i>
          <button><svg class="ic"><use href="#undo" /></svg></button>
          <button><svg class="ic"><use href="#redo" /></svg></button>
          <i class="sep"></i>
          <button><svg class="ic"><use href="#copy" /></svg></button>
          <i class="sep"></i>
          <button><svg class="ic"><use href="#binoc" /></svg></button>
          <i class="end"></i>
        </div>
        <div class="tools t-view">
          <i class="grip"></i>
          <button><svg class="ic"><use href="#fit" /></svg></button>
          <button><svg class="ic"><use href="#fitg" /></svg></button>
          <button><svg class="ic"><use href="#zrect" /></svg></button>
          <button><svg class="ic"><use href="#zoom" /></svg></button>
          <button><svg class="ic"><use href="#rot" /></svg></button>
          <button><svg class="ic"><use href="#pan" /></svg></button>
          <button><svg class="ic"><use href="#persp" /></svg></button>
          <i class="sep"></i>
          <button><svg class="ic"><use href="#cube" /></svg></button>
          <i class="arr"></i>
          <button class="on"><svg class="ic"><use href="#shade" /></svg></button>
          <button><svg class="ic"><use href="#sect" /></svg></button>
          <button><svg class="ic"><use href="#sectg" /></svg></button>
          <i class="arr"></i>
          <button><svg class="ic"><use href="#wedge" /></svg></button>
          <i class="arr"></i>
          <button><svg class="ic"><use href="#wbox" /></svg></button>
          <i class="arr"></i>
          <i class="sep"></i>
          <button><svg class="ic"><use href="#clipg" /></svg></button>
          <button><svg class="ic"><use href="#clip" /></svg></button>
          <i class="space"></i><i class="space"></i>
          <button class="more">»<i class="end"></i></button>
        </div>
        <div class="tools t-util">
          <i class="grip"></i>
          <button class="on"><svg class="ic"><use href="#csys" /></svg></button>
          <button><svg class="ic"><use href="#pts" /></svg></button>
          <button><svg class="ic"><use href="#csysr" /></svg></button>
          <button><svg class="ic"><use href="#wcs" /></svg></button>
          <button><svg class="ic"><use href="#pal" /></svg></button>
          <button><svg class="ic"><use href="#show" /></svg></button>
          <button><svg class="ic"><use href="#dia" /></svg></button>
          <button><svg class="ic"><use href="#diac" /></svg></button>
          <button><svg class="ic"><use href="#diab" /></svg></button>
          <i class="sep"></i>
          <button><svg class="ic"><use href="#ruler" /></svg></button>
          <i class="space"></i>
          <button class="more">»<i class="end"></i></button>
        </div>
        <div class="tools t-shape">
          <i class="grip"></i>
          <button><svg class="ic"><use href="#surf" /></svg></button>
          <button><svg class="ic"><use href="#surf2" /></svg></button>
          <button><svg class="ic"><use href="#slab" /></svg></button>
          <button><svg class="ic"><use href="#slabb" /></svg></button>
          <button><svg class="ic"><use href="#grid" /></svg></button>
          <button><svg class="ic"><use href="#dim" /></svg></button>
          <button><svg class="ic"><use href="#drill" /></svg></button>
          <i class="sep"></i>
          <button><svg class="ic"><use href="#flag" /></svg></button>
          <button><svg class="ic"><use href="#heat" /></svg></button>
          <i class="sep"></i>
          <button><svg class="ic"><use href="#curvep" /></svg></button>
          <button><svg class="ic"><use href="#spl" /></svg></button>
          <i class="sep"></i>
          <button><svg class="ic"><use href="#comb" /></svg></button>
          <i class="arr"></i>
          <i class="sep"></i>
          <button><svg class="ic"><use href="#cup" /></svg></button>
          <button><svg class="ic"><use href="#ribb" /></svg></button>
          <button><svg class="ic"><use href="#zeb" /></svg></button>
          <i class="sep"></i>
          <button><svg class="ic"><use href="#tree" /></svg></button>
          <button><svg class="ic"><use href="#mov" /></svg></button>
          <i class="arr"></i>
          <button><svg class="ic"><use href="#book" /></svg></button>
        </div>
      </div>

      <div class="toolrow row2">
        <div class="tools t-feat">
          <i class="grip"></i>
          <button><svg class="ic"><use href="#sk" /></svg></button>
          <i class="sep"></i>
          <button><svg class="ic"><use href="#ext" /></svg></button>
          <button><svg class="ic"><use href="#rev" /></svg></button>
          <button><svg class="ic"><use href="#swp" /></svg></button>
          <i class="sep"></i>
          <button><svg class="ic"><use href="#dome" /></svg></button>
          <i class="sep"></i>
          <button><svg class="ic"><use href="#pad" /></svg></button>
          <button><svg class="ic"><use href="#link" /></svg></button>
          <i class="end"></i>
        </div>
        <div class="tools t-op">
          <i class="grip"></i>
          <button><svg class="ic"><use href="#unite" /></svg></button>
          <i class="arr"></i>
          <button><svg class="ic"><use href="#plane" /></svg></button>
          <i class="arr"></i>
          <i class="sep"></i>
          <button><svg class="ic"><use href="#off" /></svg></button>
          <button><svg class="ic"><use href="#sph" /></svg></button>
          <button><svg class="ic"><use href="#blk" /></svg></button>
          <button><svg class="ic"><use href="#blend" /></svg></button>
          <button><svg class="ic"><use href="#blend" /></svg></button>
          <button><svg class="ic"><use href="#shell" /></svg></button>
          <button><svg class="ic"><use href="#hole" /></svg></button>
          <button><svg class="ic"><use href="#thr" /></svg></button>
          <button><svg class="ic"><use href="#cubeh" /></svg></button>
          <button><svg class="ic"><use href="#boss" /></svg></button>
          <i class="sep"></i>
          <button><svg class="ic"><use href="#split" /></svg></button>
          <button><svg class="ic"><use href="#trim" /></svg></button>
          <button class="more">»<i class="end"></i></button>
        </div>
        <div class="tools t-surf">
          <i class="grip"></i>
          <button><svg class="ic"><use href="#mesh" /></svg></button>
          <button><svg class="ic"><use href="#mesh" /></svg></button>
          <button><svg class="ic"><use href="#ring" /></svg></button>
          <button><svg class="ic"><use href="#nurb" /></svg></button>
          <button><svg class="ic"><use href="#wave" /></svg></button>
          <i class="sep"></i>
          <button><svg class="ic"><use href="#cone" /></svg></button>
          <button><svg class="ic"><use href="#stack" /></svg></button>
          <button><svg class="ic"><use href="#join" /></svg></button>
          <i class="sep"></i>
          <button><svg class="ic"><use href="#sheet" /></svg></button>
          <button><svg class="ic"><use href="#flan" /></svg></button>
          <i class="end"></i>
        </div>
        <div class="tools t-curve">
          <i class="grip"></i>
          <button class="on"><svg class="ic"><use href="#chain" /></svg></button>
          <button><svg class="ic"><use href="#line" /></svg></button>
          <button><svg class="ic"><use href="#ax" /></svg></button>
          <button><svg class="ic"><use href="#par" /></svg></button>
          <button><svg class="ic"><use href="#crs" /></svg></button>
          <button><svg class="ic"><use href="#tan" /></svg></button>
          <button><svg class="ic"><use href="#tan2" /></svg></button>
          <button><svg class="ic"><use href="#quad" /></svg></button>
          <i class="sep"></i>
          <button><svg class="ic"><use href="#arc" /></svg></button>
          <button><svg class="ic"><use href="#arc" /></svg></button>
          <button><svg class="ic"><use href="#arc2" /></svg></button>
          <button><svg class="ic"><use href="#arc3" /></svg></button>
          <i class="sep"></i>
          <button><svg class="ic"><use href="#cir3" /></svg></button>
          <button><svg class="ic"><use href="#cirt" /></svg></button>
          <button><svg class="ic"><use href="#cirq" /></svg></button>
          <button><svg class="ic"><use href="#cirr" /></svg></button>
          <i class="sep"></i>
          <button><svg class="ic"><use href="#cir" /></svg></button>
          <button><svg class="ic"><use href="#cirr" /></svg></button>
          <button><svg class="ic"><use href="#cirt" /></svg></button>
          <i class="end"></i>
        </div>
        <div class="tools t-edit">
          <i class="grip"></i>
          <button><svg class="ic"><use href="#kline" /></svg></button>
          <button><svg class="ic"><use href="#karc" /></svg></button>
          <button><svg class="ic"><use href="#kspl" /></svg></button>
          <button><svg class="ic"><use href="#kz" /></svg></button>
          <button><svg class="ic"><use href="#kspl" /></svg></button>
        </div>
      </div>

      <div class="selbar">
        <div class="combo">
          <select aria-label="选择过滤器"><option>没有选择过滤器</option></select>
          <span class="drop"></span>
        </div>
        <div class="combo wide">
          <select aria-label="选择范围"><option>整个装配</option></select>
          <span class="drop"></span>
        </div>
        <button><svg class="ic"><use href="#gh" /></svg></button>
        <i class="sep"></i>
        <button><svg class="ic"><use href="#snap" /></svg></button>
        <i class="arr"></i>
        <button><svg class="ic"><use href="#enter" /></svg></button>
        <button class="on"><svg class="ic"><use href="#mag" /></svg></button>
        <button><svg class="ic dim"><use href="#redo" /></svg></button>
        <button><svg class="ic dim"><use href="#gh" /></svg></button>
        <i class="sep"></i>
        <button><svg class="ic"><use href="#marq" /></svg></button>
        <i class="arr"></i>
        <button><svg class="ic"><use href="#cube" /></svg></button>
      </div>

      <div class="cue">
        <p>选择对象并使用 <span>MB3</span>，或者双击某一对象</p>
        <i class="cell1"></i><i class="cell2"></i>
      </div>

      <div class="railbar">
        <div class="slider">
          <button aria-label="向左">&lt;</button>
          <i></i>
          <button aria-label="向右">&gt;</button>
        </div>
      </div>

      <main>
        <aside class="tabs">
          <button><svg class="ic"><use href="#ttree" /></svg></button>
          <button class="active"><svg class="ic"><use href="#tnav" /></svg></button>
          <button><svg class="ic"><use href="#tcon" /></svg></button>
          <button class="apart"><svg class="ic"><use href="#tinfo" /></svg></button>
          <button class="apart"><svg class="ic"><use href="#thtml" /></svg></button>
          <button class="apart"><svg class="ic"><use href="#clock" /></svg></button>
          <button><svg class="ic"><use href="#tlist" /></svg></button>
          <button><svg class="ic"><use href="#tcol" /></svg></button>
          <button><svg class="ic"><use href="#tsci" /></svg></button>
          <button><svg class="ic"><use href="#tppl" /></svg></button>
          <button><svg class="ic"><use href="#tpic" /></svg></button>
        </aside>

        <section class="navigator">
          <h2><svg viewBox="0 0 7 7"><path d="M1 3l3-2 2 1v3L3 6 1 5z" fill="#9c9a2c" stroke="#333" stroke-width=".7" /></svg>部件导航器</h2>
          <table>
            <thead>
              <tr><th>名称<i class="up"></i></th><th>附注</th><th></th></tr>
            </thead>
            <tbody>
              <tr><td class="root first"><i class="nobox"></i><svg><use href="#clock" /></svg>历史模式</td><td></td><td></td></tr>
              <tr><td class="root"><i class="box plus"></i><svg><use href="#views" /></svg>模型视图</td><td></td><td></td></tr>
              <tr><td class="root"><i class="box plus"></i><b class="tick"></b><svg><use href="#cam" /></svg>摄像机</td><td></td><td></td></tr>
              <tr><td class="root"><i class="box plus"></i><svg><use href="#folde" /></svg>用户表达式</td><td></td><td></td></tr>
              <tr><td class="root"><i class="box"></i><svg><use href="#fold" /></svg>模型历史记录</td><td></td><td></td></tr>
              <tr><td class="leaf"><label><input type="checkbox" checked /><svg><use href="#datum" /></svg>基准坐标系<span>(0)</span></label></td><td></td><td></td></tr>
              <tr><td class="leaf"><label><input type="checkbox" checked /><svg><use href="#ext" /></svg>拉伸<span>(1)</span></label></td><td></td><td></td></tr>
              <tr><td class="leaf"><label><input type="checkbox" checked /><svg><use href="#ext" /></svg>拉伸<span>(2)</span></label></td><td></td><td></td></tr>
              <tr><td class="leaf"><label><input type="checkbox" checked /><svg><use href="#off" /></svg>拔模<span>(4)</span></label></td><td></td><td></td></tr>
              <tr><td class="leaf mute"><label><input type="checkbox" checked /><svg><use href="#ext" /></svg>拉伸<span>(5)</span></label></td><td></td><td></td></tr>
              <tr><td class="leaf mute"><label><input type="checkbox" checked /><svg><use href="#link" /></svg>实例几何体<span>(6)</span></label></td><td></td><td></td></tr>
              <tr><td class="leaf"><label><input type="checkbox" checked /><svg><use href="#tsplit" /></svg>拆分体<span>(7)</span></label></td><td></td><td></td></tr>
              <tr><td class="leaf"><label><input type="checkbox" checked /><svg><use href="#toff" /></svg>偏置面<span>(8)</span></label></td><td></td><td></td></tr>
              <tr><td class="leaf"><label><input type="checkbox" checked /><svg><use href="#unite" /></svg>求和<span>(9)</span></label></td><td></td><td></td></tr>
              <tr><td class="leaf"><label><input type="checkbox" checked /><svg><use href="#hole" /></svg>壳<span>(10)</span></label></td><td></td><td></td></tr>
              <tr><td class="leaf"><label><input type="checkbox" checked /><svg><use href="#rep" /></svg>替换面<span>(11)</span></label></td><td></td><td></td></tr>
              <tr><td class="leaf"><label><input type="checkbox" checked /><svg><use href="#eb" /></svg>边倒圆<span>(12)</span></label></td><td></td><td></td></tr>
              <tr><td class="leaf"><label><input type="checkbox" checked /><svg><use href="#eb" /></svg>边倒圆<span>(13)</span></label></td><td></td><td></td></tr>
              <tr><td class="leaf"><label><input type="checkbox" checked /><svg><use href="#eb" /></svg>边倒圆<span>(14)</span></label></td><td></td><td></td></tr>
              <tr><td class="leaf"><label><input type="checkbox" checked /><svg><use href="#eb" /></svg>边倒圆<span>(15)</span></label></td><td></td><td></td></tr>
              <tr><td class="leaf"><label><input type="checkbox" checked /><svg><use href="#rep" /></svg>替换面<span>(16)</span></label></td><td></td><td></td></tr>
              <tr><td class="leaf last"><label><input type="checkbox" checked /><svg><use href="#eb" /></svg>边倒圆<span>(17)</span></label></td><td></td><td></td></tr>
              <tr><td></td><td></td><td></td></tr>
              <tr><td></td><td></td><td></td></tr>
              <tr><td></td><td></td><td></td></tr>
              <tr><td></td><td></td><td></td></tr>
              <tr><td></td><td></td><td></td></tr>
              <tr><td></td><td></td><td></td></tr>
              <tr><td></td><td></td><td></td></tr>
              <tr><td></td><td></td><td></td></tr>
              <tr><td></td><td></td><td></td></tr>
              <tr><td></td><td></td><td></td></tr>
              <tr><td></td><td></td><td></td></tr>
              <tr><td></td><td></td><td></td></tr>
            </tbody>
          </table>
          <div class="handle"></div>
        </section>

        <section class="stage">
          <svg viewBox="199 83 801 395" preserveAspectRatio="xMidYMid meet">
            <defs>
              <linearGradient id="wall" gradientUnits="userSpaceOnUse" x1="462" x2="678" y1="0" y2="0">
                <stop offset="0" stop-color="#007fb4" />
                <stop offset=".1" stop-color="#0077a9" />
                <stop offset=".2" stop-color="#007cb0" />
                <stop offset=".28" stop-color="#00709f" />
                <stop offset=".36" stop-color="#006d9b" />
                <stop offset=".42" stop-color="#0078ab" />
                <stop offset=".56" stop-color="#0082b8" />
                <stop offset=".8" stop-color="#0086bf" />
                <stop offset=".84" stop-color="#0082b8" />
                <stop offset=".92" stop-color="#008ac3" />
                <stop offset="1" stop-color="#0083b8" />
              </linearGradient>
              <linearGradient id="inside" gradientUnits="userSpaceOnUse" x1="464" x2="676" y1="0" y2="0">
                <stop offset="0" stop-color="#0086bd" />
                <stop offset=".18" stop-color="#0088c0" />
                <stop offset=".36" stop-color="#0075a6" />
                <stop offset=".44" stop-color="#0090cb" />
                <stop offset=".55" stop-color="#0094d0" />
                <stop offset=".7" stop-color="#0083b9" />
                <stop offset=".85" stop-color="#0079ab" />
                <stop offset="1" stop-color="#00699a" />
              </linearGradient>
              <linearGradient id="shine" gradientUnits="userSpaceOnUse" x1="466" x2="671" y1="0" y2="0">
                <stop offset="0" stop-color="#009ad8" />
                <stop offset=".12" stop-color="#00acec" />
                <stop offset=".27" stop-color="#0092cc" />
                <stop offset=".34" stop-color="#008cc6" />
                <stop offset=".46" stop-color="#00a6ea" />
                <stop offset=".58" stop-color="#12c0ff" />
                <stop offset=".76" stop-color="#009cdc" />
                <stop offset=".82" stop-color="#0094d0" />
                <stop offset=".92" stop-color="#08bcff" />
                <stop offset="1" stop-color="#00a0de" />
              </linearGradient>
              <path id="prof" d="M470 284C474 289 490 291 507 292C519 293 525 296 528 300C534 309 556 312.500 584 312.500C610 312.500 629 308 631 300C632 295 637 294 646 293.500C658 292 666 288 668 285" fill="none" stroke-linecap="round" />
              <g id="rib">
                <use href="#prof" stroke="#005f8a" stroke-width="1.500" transform="translate(0 -6)" />
                <use href="#prof" stroke="#0083bb" stroke-width="7" transform="translate(0 1)" />
                <use href="#prof" stroke="#0093cf" stroke-width="5" />
                <use href="#prof" stroke="url(#shine)" stroke-width="3" />
              </g>
            </defs>

            <!-- cup body -->
            <path d="M468 270H669L664 367L662 408C661 413 655 416 646 417.500C634 419.500 626 420 625 424V431C623 438 604 441.500 580 441.500C558 441.500 539 438 536 434C531 428 531 424 517 422C495 420 474 417 472 408L471 367Z" fill="url(#wall)" />
            <use href="#rib" />
            <use href="#rib" transform="translate(3.400 17) scale(.994 .991)" />
            <use href="#rib" transform="translate(6.800 34) scale(.988 .982)" />
            <use href="#rib" transform="translate(10.200 51) scale(.982 .973)" />
            <use href="#rib" transform="translate(13.600 68) scale(.976 .964)" />
            <use href="#rib" transform="translate(17 85) scale(.970 .955)" />
            <g transform="translate(20.400 102) scale(.964 .946)">
              <use href="#prof" stroke="#005f8a" stroke-width="1.500" transform="translate(0 -6)" />
              <use href="#prof" stroke="#008cc6" stroke-width="4" />
              <use href="#prof" stroke="url(#shine)" stroke-width="2" />
            </g>
            <path d="M462 158L466.500 271C468 278 482 280 500 282C518 284 526 286 530 292C535 300 556 303 583 303C608 303 627 299 631 292C632 287 637 285 648 283C660 281 670 278 671 272L678.500 159L640 150H500Z" fill="url(#wall)" />
            <path d="M466.500 271C468 278 482 280 500 282C518 284 526 286 530 292C535 300 556 303 583 303C608 303 627 299 631 292C632 287 637 285 648 283C660 281 670 278 671 272" fill="none" stroke="#00587f" stroke-width="1.600" />
            <path d="M522 182L530 290M640 182L632 290" stroke="#00709f" stroke-width="1.500" opacity=".5" />
            <path d="M464 158C465 149 490 144.500 517 144.500C540 144.500 552 148 567 148C585 148 590 142.500 617 142.500C650 142.500 676 149 676.500 159C676 167 662 170.500 650 172C637 174 633 176.500 637 179.500C643 186 614 193.500 584 193.500C556 193.500 535 189 527 182C523 178 522 175 508 173.500C488 172 466 168 464 158Z" fill="url(#inside)" stroke="#009cdb" stroke-width="4.500" />
            <path d="M463.500 158C465 149 490 144 517 144C540 144 552 147.500 567 147.500C585 147.500 590 142 617 142C650 142 676 149 676.500 159C676 167 662 170.500 650 172C637 174 633 176.500 637 179.500C643 186 614 193 584 193C556 193 535 189 527 182C523 178 522 175 508 173.500C488 172 466 168 463.500 158Z" fill="none" stroke="#00bdfa" stroke-width="2" />

            <!-- work coordinate system -->
            <g class="axes">
              <path d="M571 416V380M571 416L604 420M571 416L558 424M571 365L568 380H574ZM620 422L605 417V423ZM551 429L556 422L560 426Z" />
              <text x="572" y="363">Z</text>
              <text x="572" y="396">ZC</text>
              <text x="590" y="419">YC</text>
              <text x="622" y="424">Y</text>
              <text x="563" y="422">XC</text>
            </g>
            <text class="zmark" x="226" y="474">z</text>
            <path d="M228.500 475v3" stroke="#5a5af0" />

            <!-- watermark -->
            <g class="mark">
              <text class="bai" x="766" y="427">Bai</text>
              <ellipse cx="835.500" cy="393" rx="6.500" ry="9" />
              <ellipse cx="848" cy="380.500" rx="6.500" ry="9" />
              <ellipse cx="864.500" cy="381.500" rx="6.500" ry="9" />
              <ellipse cx="874" cy="397" rx="6.500" ry="8" />
              <path d="M855 394.500C863 394.500 865 401 871 407C879 414 878 427 868 427.500C862 428 859 427 855 427C850 427 846 428.500 840 427.500C830 426 831 413 838 407C845 402 847 394.500 855 394.500Z" />
              <text class="du" x="841" y="423">du</text>
              <text class="exp" x="883" y="425">经验</text>
              <text class="url" x="769" y="449">jingyan.baidu.com</text>
            </g>
          </svg>
        </section>
      </main>
    </div>
  </body>
</html>
```

FILE: styles.css
```css
* {
  box-sizing: border-box;
  margin: 0;
  padding: 0;
}

body {
  font-family: "Liberation Sans", "Noto Sans CJK SC", sans-serif;
  font-size: 6px;
  color: #222;
  background: #d4d4d4;
}

button {
  border: none;
  background: none;
  font: inherit;
  color: inherit;
}

i {
  display: block;
  flex: none;
}

.defs {
  position: absolute;
  width: 0;
  height: 0;
}

.app {
  display: flex;
  flex-direction: column;
  height: 100vh;
  overflow: hidden;
}

.ic {
  display: block;
  flex: none;
  width: 12px;
  height: 12px;
}

/* menu */
.menubar {
  display: flex;
  align-items: center;
  flex: none;
  height: 12px;
  padding-left: 3px;
  background: #e4e4e4;
}

.menubar .ic {
  width: 10px;
  height: 10px;
}

.menubar > button {
  padding: 0 6px 0 3px;
  min-width: 29px;
  font-size: 6px;
  line-height: 10px;
  font-family: "Noto Sans CJK SC", sans-serif;
  text-align: left;
  white-space: nowrap;
}

.wincontrols {
  display: flex;
  gap: 2px;
  margin-left: auto;
  margin-right: -5px;
}

.wincontrols button {
  width: 10px;
  height: 9px;
  border: 1px solid #a2a2a2;
  border-radius: 1px;
  background: #f2f2f2;
}

.wincontrols .min {
  background: linear-gradient(#555, #555) center bottom 1px / 4px 1px no-repeat #f2f2f2;
}

.wincontrols .max {
  background: linear-gradient(#777, #777) 3px 2px / 6px 1px no-repeat #f2f2f2;
}

/* toolbars */
.toolrow {
  display: flex;
  flex: none;
  height: 18px;
  border-top: 1px solid #f2f2f2;
}

.row1 {
  background: linear-gradient(#e2e2e2, #d3d3d3);
}

.row2 {
  background: linear-gradient(#dedede, #c8c8c8);
  border-bottom: 1px solid #a0a0a0;
  height: 19px;
}

.tools {
  display: flex;
  align-items: center;
  justify-content: space-between;
  min-width: 0;
  padding: 0 1px;
}

.t-std { flex: 173 1 0; }
.t-view { flex: 305 1 0; }
.t-util { flex: 186 1 0; }
.t-shape { flex: 336 1 0; }
.t-feat { flex: 137 1 0; }
.t-op { flex: 269 1 0; }
.t-surf { flex: 180 1 0; }
.t-curve { flex: 336 1 0; }
.t-edit { flex: 78 1 0; }

.tools button {
  flex: none;
  width: 14px;
  display: flex;
  align-items: center;
  justify-content: center;
}

.tools .on,
.selbar .on {
  width: 16px;
  height: 16px;
  background: #fcfcfc;
  border: 1px solid #9a9a9a;
}

.tools .start {
  width: auto;
  gap: 1px;
  font-family: "Noto Sans CJK SC", sans-serif;
}

.grip {
  width: 2px;
  height: 13px;
  margin-right: -2px;
  background: repeating-linear-gradient(#a8a8a8 0 1px, #eee 1px 2px);
}

.sep {
  width: 1px;
  height: 15px;
  background: #ececec;
}

.arr {
  width: 6px;
  height: 3px;
  background: #333;
  clip-path: polygon(20% 20%, 80% 20%, 50% 100%);
}

.end {
  width: 4px;
  height: 2px;
  align-self: flex-end;
  margin-bottom: 2px;
  background: #222;
  clip-path: polygon(0 0, 100% 0, 50% 100%);
}

.space {
  width: 4px;
}

.tools .more {
  width: 6px;
  height: 15px;
  flex-direction: column;
  justify-content: space-between;
  font-size: 8px;
  font-weight: bold;
  line-height: 6px;
}

.more .end {
  align-self: center;
  margin: 0;
}

/* selection bar */
.selbar {
  display: flex;
  align-items: center;
  gap: 3px;
  flex: none;
  height: 14px;
  padding-left: 2px;
  background: linear-gradient(#c6c6c6, #d6d6d6);
}

.selbar .ic {
  width: 10px;
  height: 10px;
}

.selbar .on {
  width: 13px;
  height: 12px;
  display: flex;
  align-items: center;
  justify-content: center;
}

.selbar .sep {
  height: 12px;
}

.selbar .dim {
  opacity: 0.8;
}

.combo {
  position: relative;
  width: 59px;
  height: 10px;
}

.combo.wide {
  width: 64px;
}

.combo select {
  display: block;
  width: 100%;
  height: 10px;
  appearance: none;
  border: 1px solid #a6a6a6;
  background: #ececec;
  font: 6px/8px "Noto Sans CJK SC", sans-serif;
  color: #111;
}

.drop {
  position: absolute;
  top: 1px;
  right: 1px;
  width: 8px;
  height: 8px;
  background: linear-gradient(#7fb2ea, #3a76c8);
  pointer-events: none;
}

.drop::after {
  content: "";
  position: absolute;
  inset: 3px 1px 2px;
  background: #0c1c40;
  clip-path: polygon(0 0, 100% 0, 50% 100%);
}

/* cue line */
.cue {
  display: flex;
  align-items: center;
  flex: none;
  height: 11px;
  border-top: 1px solid #e6e6e6;
  background: #d7d7d7;
  padding-left: 1px;
}

.cue p {
  flex: 1;
  font: bold 7px/10px "Noto Sans CJK SC", sans-serif;
  color: #000;
}

.cue span {
  font-family: "Liberation Mono", monospace;
}

.cell1,
.cell2 {
  align-self: stretch;
  border-left: 1px solid #eee;
}

.cell1 {
  width: 10px;
}

.cell2 {
  width: 14px;
}

.railbar {
  position: relative;
  z-index: 1;
  flex: none;
  height: 9px;
  padding-left: 77px;
  background: linear-gradient(#a6a6a6 0 1px, #bcbcbc 1px 3px, #e2e2e2 3px 5px, #c6c6c6 5px 7px, #858585 7px 8px, #b1b2b4 8px);
}

.slider {
  display: flex;
  width: 55px;
  height: 10px;
}

.slider button {
  width: 11px;
  height: 10px;
  border: 1px solid #8e8e8e;
  background: #ececec;
  font: bold 8px/8px "Liberation Sans", sans-serif;
}

.slider i {
  flex: 1;
  margin-top: 1px;
  background: #1b1b1b;
}

/* main area */
main {
  display: flex;
  flex: 1;
  min-height: 0;
}

.tabs {
  flex: none;
  width: 17px;
  padding: 9px 0 0 3px;
  background: #b0b0b0;
}

.tabs button {
  display: flex;
  align-items: center;
  justify-content: center;
  width: 14px;
  height: 22px;
  border: 1px solid #8c8c8c;
  border-right: none;
  border-radius: 2px 0 0 2px;
  background: #cdcdcd;
}

.tabs .active {
  background: #ececec;
  border-color: #d8d8d8;
}

.tabs .apart {
  margin-top: 6px;
}

.navigator {
  display: flex;
  flex-direction: column;
  flex: none;
  width: 182px;
  padding: 4px 4px 0 5px;
  background: #ececec;
  border-left: 1px solid #f8f8f8;
  border-right: 2px solid #7d8184;
}

.navigator h2 {
  display: flex;
  align-items: center;
  gap: 6px;
  padding-left: 2px;
  flex: none;
  height: 13px;
  font: bold 7px/12px "Noto Sans CJK SC", sans-serif;
  color: #000;
}

.navigator h2 svg {
  width: 7px;
  height: 7px;
}

table {
  display: flex;
  flex-direction: column;
  flex: 1;
  min-height: 0;
  border: 1px solid #9b9b9b;
  background: #fff;
  font: 6px/9px "Noto Sans CJK SC", sans-serif;
  padding-bottom: 3px;
}

tr {
  display: grid;
  grid-template-columns: 106fr 53fr 11fr;
  min-height: 0;
}

thead tr {
  height: 9px;
  background: linear-gradient(#f2f2f2, #dfe1e1);
  border-bottom: 1px solid #b4b4b4;
}

th {
  display: flex;
  align-items: center;
  padding-left: 3px;
  font-weight: normal;
  border-right: 1px solid #c6c6c6;
}

.up {
  width: 6px;
  height: 4px;
  margin-left: 8px;
  background: #111;
  clip-path: polygon(50% 0, 100% 100%, 0 100%);
}

tbody {
  display: grid;
  flex: 1;
  min-height: 0;
  grid-auto-rows: minmax(0, 1fr);
}

tbody tr:nth-child(even) {
  background: #f5f5f5;
}

td {
  display: flex;
  align-items: center;
  min-height: 0;
  border-right: 1px solid #ededed;
  border-bottom: 1px solid #f0f0f0;
  white-space: nowrap;
}

td svg {
  flex: none;
  width: 9px;
  height: 9px;
  margin-right: 1px;
}

.root {
  padding-left: 3px;
}

.box {
  width: 5px;
  height: 5px;
  margin-right: 2px;
  border: 1px solid #b4b4b4;
  background: linear-gradient(#666, #666) center / 3px 1px no-repeat #fff;
}

.plus {
  background: linear-gradient(#666, #666) center / 3px 1px no-repeat, linear-gradient(#666, #666) center / 1px 3px no-repeat #fff;
}

.nobox {
  width: 5px;
  height: 5px;
  margin: 0 0 0 2px;
  align-self: flex-end;
  border: solid #c4c4c4;
  border-width: 1px 0 0 1px;
}

.tick {
  width: 8px;
  height: 7px;
  background: #16b52c;
  clip-path: polygon(0 50%, 20% 35%, 40% 62%, 88% 0, 100% 10%, 42% 100%);
}

.leaf {
  padding-left: 15px;
}

.leaf::before {
  content: "";
  width: 5px;
  align-self: stretch;
  border-left: 1px solid #c8c8c8;
  background: linear-gradient(#c8c8c8, #c8c8c8) center / 100% 1px no-repeat;
}

.leaf.last::before {
  border-left-color: transparent;
}

.leaf label {
  display: flex;
  align-items: center;
}

.leaf input {
  appearance: none;
  width: 7px;
  height: 7px;
  margin: 0 1px 0 0;
  border: 1px solid #4c5c4c;
  background: #fff;
}

.leaf input:checked::before {
  content: "";
  display: block;
  width: 5px;
  height: 5px;
  background: #14a82a;
  clip-path: polygon(0 45%, 20% 30%, 40% 60%, 85% 0, 100% 20%, 42% 100%);
}

.leaf span {
  margin-left: 5px;
}

.mute {
  color: #a4a4a4;
}

.mute svg {
  opacity: 0.7;
}

.handle {
  flex: none;
  width: 30px;
  height: 2px;
  margin: 2px auto 0;
  background: #cfcfcf;
  border-top: 1px solid #aaa;
}

.stage {
  flex: 1;
  min-width: 0;
  background: linear-gradient(#b1b2b4, #c3c4c6 15%, #d0d1d3 36%, #dadbdd 58%, #e4e5e7 78%, #e8e9eb);
}

.stage svg {
  display: block;
  width: 100%;
  height: 100%;
}

.axes path {
  fill: none;
  stroke: #cfe4ec;
  stroke-width: 1;
}

.axes text {
  font: 6px "Liberation Sans", sans-serif;
  fill: #bcd6e2;
}

.zmark {
  font: 7px "Liberation Sans", sans-serif;
  fill: #5a5af0;
}

.mark {
  fill: #f7f8f8;
  stroke: #cbcdd0;
  stroke-width: 1;
  paint-order: stroke;
}

.mark text {
  stroke-width: 2px;
  stroke-linejoin: round;
}

.mark .bai {
  font: bold 39px "Liberation Sans", sans-serif;
}

.mark .du {
  font: bold 24px "Liberation Sans", sans-serif;
  fill: #cbcdd0;
  stroke: none;
}

.mark .exp {
  font: bold 30px "Noto Sans CJK SC", sans-serif;
}

.mark .url {
  font: 20px "Noto Sans", sans-serif;
}
```
